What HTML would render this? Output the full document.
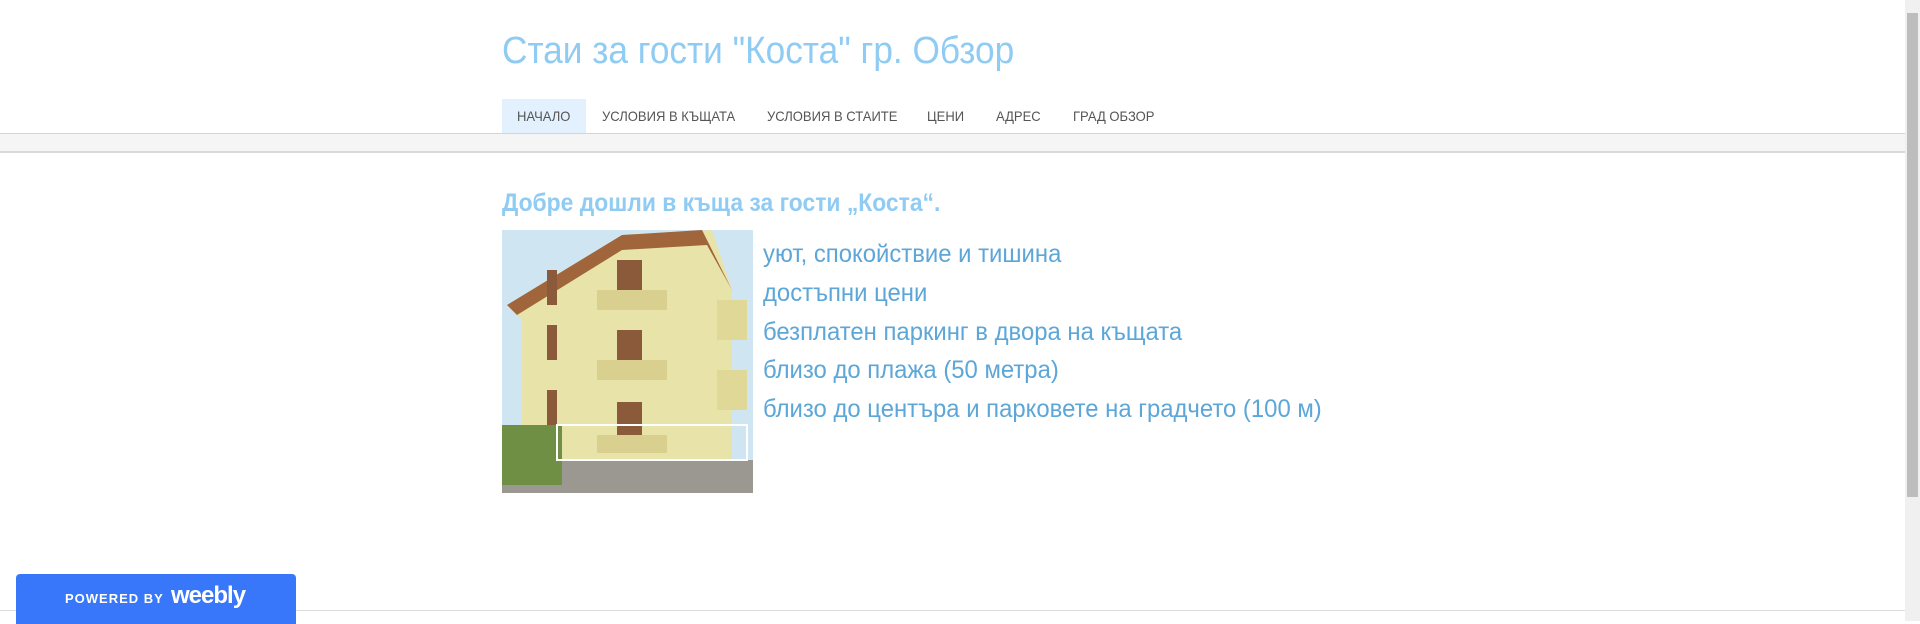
<!DOCTYPE html>
<html><head><meta charset="utf-8"><style>
*{margin:0;padding:0;box-sizing:border-box}
body{width:1920px;height:621px;overflow:hidden;background:#fff;font-family:"Liberation Sans",sans-serif;position:relative}
.a{position:absolute;white-space:nowrap}
.title{left:502px;top:30px;font-size:38px;color:#8fcbf3;transform:scaleX(0.927);transform-origin:0 0}
.navbg{left:502px;top:99px;width:84px;height:34px;background:#e2f1fd}
.nav{top:99px;height:34px;line-height:34px;font-size:14px;color:#555;transform:scaleX(0.93);transform-origin:0 0}
.l1{left:0;top:133px;width:1905px;height:1px;background:#d4d4d4}
.band{left:0;top:134px;width:1905px;height:17px;background:#f5f5f5}
.l2{left:0;top:151px;width:1905px;height:2px;background:#d9d9d9}
.h{left:502px;top:189px;font-size:25px;font-weight:bold;color:#8fcbf3;transform:scaleX(0.915);transform-origin:0 0}
.li{left:763px;font-size:25px;color:#5ca6d8;transform:scaleX(0.955);transform-origin:0 0}
.foot{left:0;top:610px;width:1905px;height:1px;background:#ddd}
.badge{left:16px;top:574px;width:280px;height:50px;background:#3877f9;border-radius:4px 4px 0 0;color:#fff}
.sb{left:1905px;top:0;width:15px;height:621px;background:#f0f0f0}
.th{left:1907px;top:13px;width:11px;height:484px;background:#bdbdbd}
</style></head><body>
<div class="a title">Стаи за гости "Коста" гр. Обзор</div>
<div class="a navbg"></div>
<div class="a nav" style="left:517px">НАЧАЛО</div>
<div class="a nav" style="left:602px">УСЛОВИЯ В КЪЩАТА</div>
<div class="a nav" style="left:767px">УСЛОВИЯ В СТАИТЕ</div>
<div class="a nav" style="left:927px">ЦЕНИ</div>
<div class="a nav" style="left:996px">АДРЕС</div>
<div class="a nav" style="left:1073px">ГРАД ОБЗОР</div>
<div class="a l1"></div><div class="a band"></div><div class="a l2"></div>
<div class="a h">Добре дошли в къща за гости „Коста“.</div>
<svg class="a" style="left:502px;top:230px" width="251" height="263" viewBox="0 0 251 263">
<rect width="251" height="263" fill="#cfe6f2"/>
<polygon points="5,75 20,90 20,230 230,230 230,60 210,0 120,5 5,75" fill="#e8e3a8"/>
<polygon points="5,75 120,5 200,0 230,60 205,15 120,20 15,85" fill="#a0653a"/>
<rect x="95" y="60" width="70" height="20" fill="#d9d090"/>
<rect x="95" y="130" width="70" height="20" fill="#d9d090"/>
<rect x="95" y="205" width="70" height="18" fill="#d9d090"/>
<rect x="215" y="70" width="30" height="40" fill="#e0d896"/>
<rect x="215" y="140" width="30" height="40" fill="#e0d896"/>
<rect x="45" y="40" width="10" height="35" fill="#8a5a3a"/>
<rect x="45" y="95" width="10" height="35" fill="#8a5a3a"/>
<rect x="45" y="160" width="10" height="35" fill="#8a5a3a"/>
<rect x="115" y="30" width="25" height="30" fill="#8a5a3a"/>
<rect x="115" y="100" width="25" height="30" fill="#8a5a3a"/>
<rect x="115" y="172" width="25" height="33" fill="#8a5a3a"/>
<rect x="0" y="230" width="251" height="33" fill="#9a9890"/>
<rect x="0" y="195" width="60" height="60" fill="#6f8f45"/>
<rect x="55" y="195" width="190" height="35" fill="none" stroke="#fff" stroke-width="2"/>
</svg>
<div class="a li" style="top:240px">уют, спокойствие и тишина</div>
<div class="a li" style="top:279px">достъпни цени</div>
<div class="a li" style="top:318px">безплатен паркинг в двора на къщата</div>
<div class="a li" style="top:356px">близо до плажа (50 метра)</div>
<div class="a li" style="top:395px">близо до центъра и парковете на градчето (100 м)</div>
<div class="a foot"></div>
<div class="a badge"><span class="a" style="left:49px;top:17px;font-weight:bold;font-size:13px;letter-spacing:1px">POWERED BY</span><span class="a" style="left:155px;top:8px;font-weight:bold;font-size:24px;letter-spacing:-1px">weebly</span></div>
<div class="a sb"></div><div class="a th"></div>
</body></html>
